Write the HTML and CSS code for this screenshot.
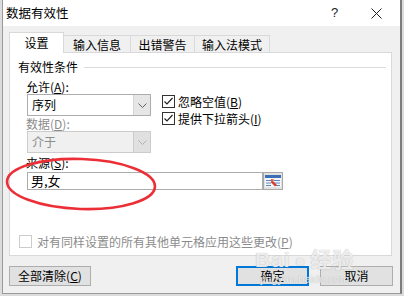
FILE: index.html
```html
<!DOCTYPE html>
<html lang="zh-CN">
<head>
    <meta charset="UTF-8">
    <meta name="viewport" content="width=device-width, initial-scale=1.0">
    <title>数据有效性</title>
    <link rel="stylesheet" href="styles.css">
</head>
<body>
    <div class="dialog">
        <div class="titlebar">
            <span class="title">数据有效性</span>
            <span class="help">?</span>
            <span class="close">
                <svg width="11" height="11" viewBox="0 0 11 11"><path d="M0.5 0.5 L10.5 10.5 M10.5 0.5 L0.5 10.5" stroke="#222" stroke-width="1" fill="none"/></svg>
            </span>
        </div>
        <div class="content">
            <div class="tabs">
                <div class="tab active">设置</div>
                <div class="tab">输入信息</div>
                <div class="tab">出错警告</div>
                <div class="tab">输入法模式</div>
            </div>
            <div class="panel">
                <div class="group-head">
                    <span>有效性条件</span>
                    <span class="rule"></span>
                </div>
                <div class="criteria">
                    <div class="left-col">
                        <div class="label first">允许(<u>A</u>):</div>
                        <div class="select">
                            <span class="value">序列</span>
                            <span class="arrow"><svg width="9" height="5" viewBox="0 0 9 5"><path d="M0.5 0.5 L4.5 4.5 L8.5 0.5" stroke="#606060" fill="none"/></svg></span>
                        </div>
                        <div class="label disabled">数据(<u>D</u>):</div>
                        <div class="select disabled">
                            <span class="value">介于</span>
                            <span class="arrow"><svg width="9" height="5" viewBox="0 0 9 5"><path d="M0.5 0.5 L4.5 4.5 L8.5 0.5" stroke="#b0b0b0" fill="none"/></svg></span>
                        </div>
                    </div>
                    <div class="right-col">
                        <div class="check">
                            <span class="box"><svg width="11" height="11" viewBox="0 0 11 11"><path d="M1.5 5.5 L4 8 L9.5 2" stroke="#222" stroke-width="1.2" fill="none"/></svg></span>
                            <span>忽略空值(<u>B</u>)</span>
                        </div>
                        <div class="check">
                            <span class="box"><svg width="11" height="11" viewBox="0 0 11 11"><path d="M1.5 5.5 L4 8 L9.5 2" stroke="#222" stroke-width="1.2" fill="none"/></svg></span>
                            <span>提供下拉箭头(<u>I</u>)</span>
                        </div>
                    </div>
                </div>
                <div class="label source-label">来源(<u>S</u>):</div>
                <div class="source-row">
                    <div class="input">男,女</div>
                    <div class="ref-btn">
                        <svg width="16" height="12" viewBox="0 0 16 12">
                            <rect x="0" y="0" width="16" height="12" fill="#f4f7fb"/>
                            <rect x="0" y="0" width="16" height="3" fill="#3d6fb5"/>
                            <path d="M1 5.5 H6 M9 5.5 H15 M1 8 H6 M9 8 H15 M1 10.5 H6 M11 10.5 H15" stroke="#5b86c4" stroke-width="1"/>
                            <path d="M6 4 L12 10 L10 11.5 L6 7.5 Z" fill="#d9402b"/>
                            <path d="M6 4 L6 8 L9.5 4.5 Z" fill="#e85a3c"/>
                        </svg>
                    </div>
                </div>
                <div class="check apply">
                    <span class="box"></span>
                    <span>对有同样设置的所有其他单元格应用这些更改(<u>P</u>)</span>
                </div>
            </div>
            <div class="footer">
                <button class="btn clear">全部清除(<u>C</u>)</button>
                <span class="spacer"></span>
                <button class="btn default">确定</button>
                <button class="btn">取消</button>
            </div>
        </div>

        <!-- hand-drawn red circle over the source field -->
        <svg class="mark" width="160" height="62" viewBox="0 0 160 62">
            <ellipse cx="78" cy="29" rx="74" ry="25" transform="rotate(2 78 29)" stroke="#ec2f36" stroke-width="2.6" fill="none"/>
        </svg>

        <div class="watermark">
            <span class="wm-big">Bai<span class="paw">●</span>经验</span>
            <span class="wm-small">jingyan.baidu.com</span>
        </div>
    </div>
</body>
</html>
```

FILE: styles.css
```css
body {
    margin: 0;
    padding: 0;
    background: #dcdcdc;
    font-family: "Noto Sans CJK SC", "Liberation Sans", sans-serif;
    font-size: 12px;
    color: #000;
    width: 404px;
    height: 296px;
    overflow: hidden;
}

.dialog {
    position: relative;
    margin-left: 2px;
    width: 397px;
    height: 293px;
    background: #f0f0f0;
    border-left: 1px solid #9a9a9a;
    border-right: 2px solid #7c7c7c;
    border-bottom: 1px solid #9a9a9a;
    display: flex;
    flex-direction: column;
}

.titlebar {
    height: 26px;
    background: #fff;
    display: flex;
    align-items: center;
    padding-left: 3px;
}

.title {
    flex: 1;
    font-size: 12.5px;
    line-height: 16px;
}

.help {
    width: 10px;
    font-family: "Liberation Sans", sans-serif;
    font-size: 13px;
    color: #222;
    margin-right: 30px;
    margin-top: -1px;
}

.close {
    width: 11px;
    height: 11px;
    margin-right: 18px;
    display: flex;
}

.content {
    flex: 1;
    padding: 6px 6px 0 6px;
    display: flex;
    flex-direction: column;
}

.tabs {
    display: flex;
    align-items: flex-end;
    height: 20px;
    position: relative;
    z-index: 1;
}

.tab {
    height: 17px;
    line-height: 17px;
    box-sizing: border-box;
    border: 1px solid #d9d9d9;
    border-bottom: none;
    border-left: none;
    background: #f0f0f0;
    text-align: center;
    font-size: 12px;
}

.tab:nth-child(2) { width: 67px; }
.tab:nth-child(3) { width: 64px; }
.tab:nth-child(4) { width: 75px; }

.tab.active {
    width: 55px;
    height: 21px;
    line-height: 20px;
    margin-bottom: -1px;
    background: #fff;
    border-left: 1px solid #d9d9d9;
}

.panel {
    width: 383px;
    height: 204px;
    box-sizing: border-box;
    background: #fff;
    border: 1px solid #d9d9d9;
    padding: 6px 5px 6px 8px;
    display: flex;
    flex-direction: column;
}

.group-head {
    display: flex;
    align-items: center;
    line-height: 16px;
    height: 16px;
}

.group-head .rule {
    flex: 1;
    height: 1px;
    background: #dcdcdc;
    margin-left: 6px;
}

.criteria {
    display: flex;
    padding-left: 9px;
    margin-top: 4px;
}

.left-col {
    width: 124px;
    display: flex;
    flex-direction: column;
}

.label {
    height: 15px;
    line-height: 15px;
    margin-left: -1px;
}

.label.disabled {
    color: #8c8c8c;
}

.select {
    height: 22px;
    box-sizing: border-box;
    border: 1px solid #acacac;
    background: #fff;
    display: flex;
    align-items: center;
}

.select .value {
    flex: 1;
    padding-left: 4px;
    line-height: 20px;
}

.select .arrow {
    width: 16px;
    height: 20px;
    background: #e6e6e6;
    border-left: 1px solid #d4d4d4;
    display: flex;
    align-items: center;
    justify-content: center;
}

.select.disabled {
    background: #f0f0f0;
    border-color: #cccccc;
    color: #8c8c8c;
}

.select.disabled .arrow {
    background: #e0e0e0;
    border-left-color: #cccccc;
}

.right-col {
    margin-left: 11px;
    padding-top: 14px;
    display: flex;
    flex-direction: column;
}

.check {
    display: flex;
    align-items: center;
    height: 17px;
    line-height: 17px;
}

.check .box {
    width: 13px;
    height: 13px;
    box-sizing: border-box;
    border: 1px solid #333;
    background: #fff;
    margin-right: 3px;
    display: flex;
    align-items: center;
    justify-content: center;
}

.source-label {
    margin-top: 2px;
    margin-left: 8px;
}

.source-row {
    display: flex;
    margin-left: 9px;
    margin-top: 2px;
}

.input {
    width: 236px;
    height: 18px;
    box-sizing: border-box;
    border: 1px solid #acacac;
    padding-left: 3px;
    line-height: 16px;
    font-size: 13px;
}

.ref-btn {
    width: 20px;
    height: 18px;
    box-sizing: border-box;
    border: 1px solid #a8a8a8;
    background: #e1e1e1;
    display: flex;
    align-items: center;
    justify-content: center;
}

.check.apply {
    margin-top: auto;
    height: 16px;
    color: #8c8c8c;
    margin-left: 1px;
}

.check.apply .box {
    border-color: #cccccc;
    margin-right: 5px;
}

.footer {
    display: flex;
    margin-top: 10px;
    width: 384px;
}

.spacer {
    flex: 1;
}

.btn {
    height: 20px;
    width: 73px;
    box-sizing: border-box;
    border: 1px solid #adadad;
    background: #e1e1e1;
    font-family: inherit;
    font-size: 12px;
    line-height: 16px;
    padding: 0;
    color: #000;
}

.btn.clear {
    width: 82px;
}

.btn.default {
    border: 2px solid #0078d7;
    margin-right: 11px;
}

.mark {
    position: absolute;
    left: 0;
    top: 155px;
}

.watermark {
    position: absolute;
    left: 252px;
    top: 248px;
    display: flex;
    flex-direction: column;
    align-items: center;
    color: rgba(255, 255, 255, 0.8);
    text-shadow: 0 0 1px rgba(130, 130, 130, 0.7);
    pointer-events: none;
}

.wm-big {
    font-family: "Liberation Sans", "Noto Sans CJK SC", sans-serif;
    font-size: 21px;
    font-weight: bold;
    line-height: 24px;
    letter-spacing: 1px;
}

.paw {
    font-size: 18px;
    margin: 0 4px;
}

.wm-small {
    font-family: "Liberation Sans", sans-serif;
    font-size: 11px;
    line-height: 12px;
    margin-top: 0;
}
```
